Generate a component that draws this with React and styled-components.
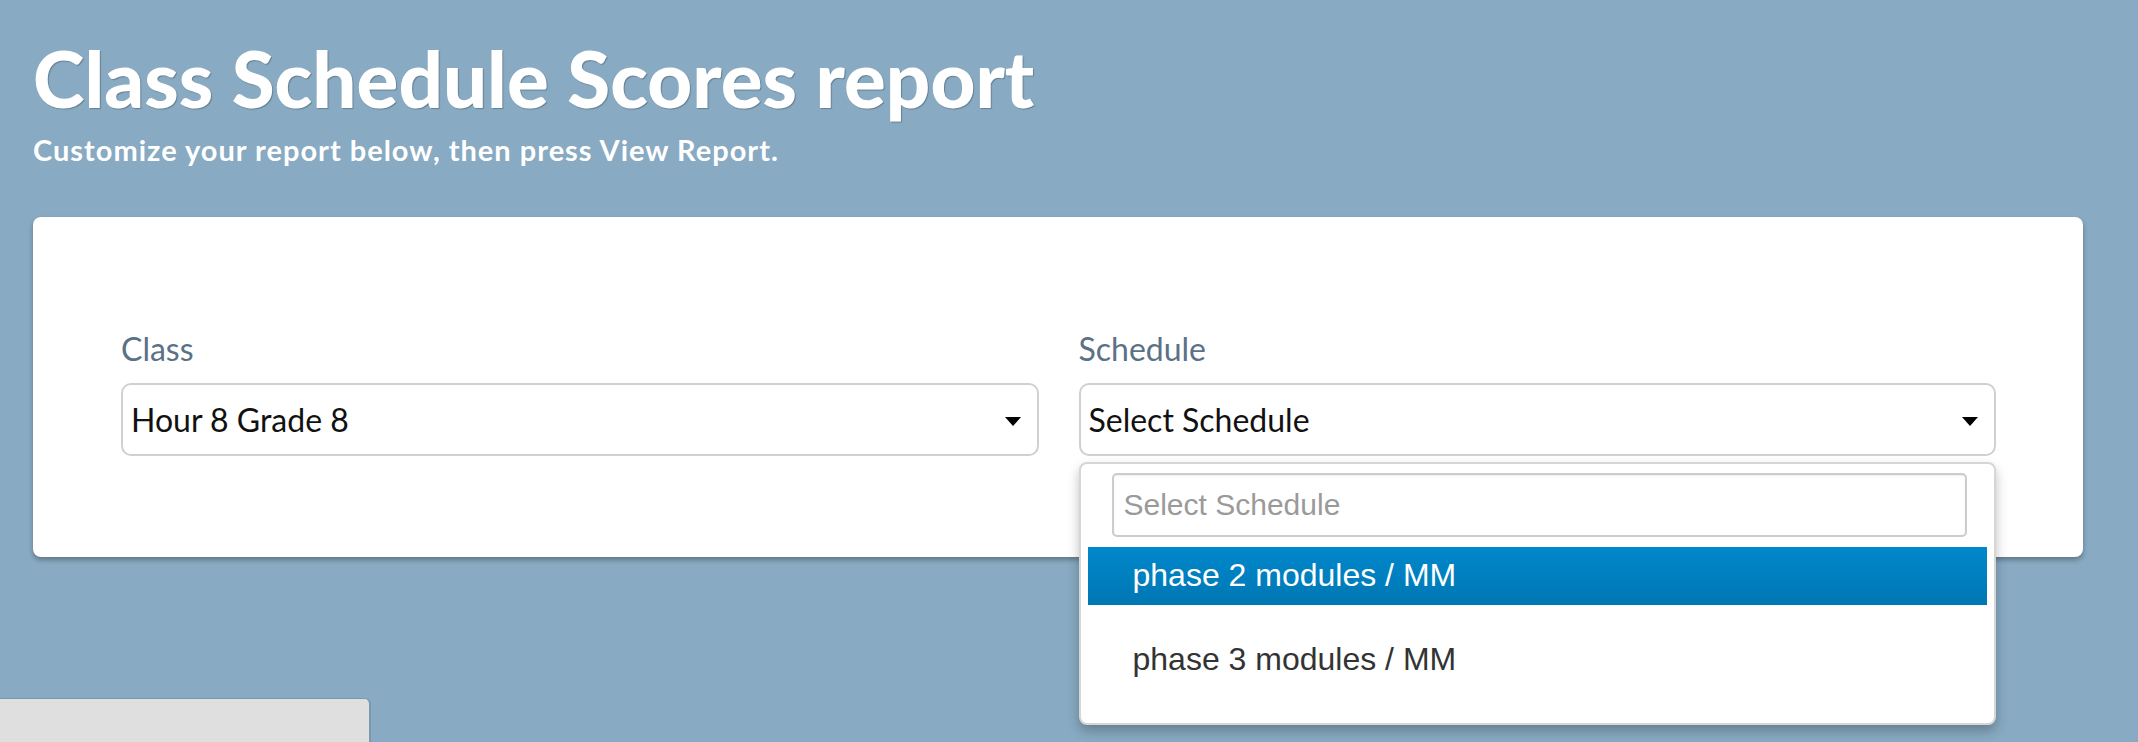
import React from 'react';
import styled, { createGlobalStyle } from 'styled-components';

const GlobalStyle = createGlobalStyle`
  html, body {
    margin: 0;
    padding: 0;
    overflow: hidden;
    background-color: #88aac2;
  }
  body {
    font-family: 'Lato', 'Noto Sans', sans-serif;
  }
`;

const Page = styled.div`
  display: flex;
  flex-direction: column;
  min-height: 742px;
`;

const Header = styled.div`
  padding: 32px 33px 0 33px;
`;

const Title = styled.h1`
  margin: 0;
  font-family: 'Lato', sans-serif;
  font-weight: 900;
  font-size: 78px;
  line-height: 1.2;
  color: #ffffff;
  text-shadow: 1px 1px 1px rgba(0, 0, 0, 0.25);
`;

const Subtitle = styled.div`
  margin-top: 7px;
  font-family: 'Lato', sans-serif;
  font-weight: 700;
  font-size: 29px;
  letter-spacing: 1px;
  line-height: 1.2;
  color: #ffffff;
`;

const Card = styled.div`
  margin: 50px 55px 0 33px;
  background-color: #ffffff;
  border-radius: 8px;
  box-shadow: 0 3px 5px rgba(0, 0, 0, 0.3);
  padding: 113px 87px 101px 88px;
  display: grid;
  grid-template-columns: 1fr 1fr;
  column-gap: 40px;
`;

const Field = styled.div`
  position: relative;
  display: flex;
  flex-direction: column;
`;

const Label = styled.label`
  font-family: 'Lato', sans-serif;
  font-size: 32px;
  line-height: 1.2;
  color: #5b7186;
  margin-bottom: 14px;
`;

const SelectBox = styled.div`
  height: 73px;
  box-sizing: border-box;
  border: 2px solid #d0d0d0;
  border-radius: 10px;
  display: flex;
  align-items: center;
  justify-content: space-between;
  padding: 0 16px 0 8px;
  font-family: 'Lato', sans-serif;
  font-size: 32px;
  color: #111111;
`;

const Caret = styled.span`
  width: 0;
  height: 0;
  border-left: 8px solid transparent;
  border-right: 8px solid transparent;
  border-top: 9px solid #000000;
  margin-top: 4px;
`;

const Dropdown = styled.div`
  position: absolute;
  top: calc(100% + 6px);
  left: 0;
  right: 0;
  box-sizing: border-box;
  background-color: #ffffff;
  border: 2px solid #d6d6d6;
  border-radius: 8px;
  box-shadow: 0 6px 12px rgba(0, 0, 0, 0.25);
  padding: 9px 7px 34px 7px;
  z-index: 5;
`;

const Search = styled.div`
  margin: 0 20px 10px 24px;
  height: 64px;
  box-sizing: border-box;
  border: 2px solid #cccccc;
  border-radius: 5px;
  box-shadow: inset 0 1px 2px rgba(0, 0, 0, 0.08);
  display: flex;
  align-items: center;
  padding-left: 10px;
  font-family: 'Liberation Sans', Arial, sans-serif;
  font-size: 30px;
  color: #9a9a9a;
`;

const Option = styled.div`
  height: 58px;
  display: flex;
  align-items: center;
  padding-left: 45px;
  margin-top: ${(props) => (props.$gap ? '26px' : '0')};
  font-family: 'Liberation Sans', Arial, sans-serif;
  font-size: 32px;
  color: ${(props) => (props.$active ? '#ffffff' : '#333333')};
  background: ${(props) =>
    props.$active ? 'linear-gradient(to bottom, #0088cc, #0077b3)' : 'transparent'};
`;

const BottomTab = styled.div`
  margin-top: auto;
  width: 371px;
  height: 44px;
  box-sizing: border-box;
  background-color: #dfdfdf;
  border-top: 1px solid #7b98ac;
  border-right: 2px solid #7b98ac;
  border-top-right-radius: 6px;
`;

const App = () => {
  return (
    <>
      <GlobalStyle />
      <Page>
        <Header>
          <Title>Class Schedule Scores report</Title>
          <Subtitle>Customize your report below, then press View Report.</Subtitle>
        </Header>
        <Card>
          <Field>
            <Label>Class</Label>
            <SelectBox>
              <span>Hour 8 Grade 8</span>
              <Caret />
            </SelectBox>
          </Field>
          <Field>
            <Label>Schedule</Label>
            <SelectBox>
              <span>Select Schedule</span>
              <Caret />
            </SelectBox>
            <Dropdown>
              <Search>Select Schedule</Search>
              <Option $active>phase 2 modules / MM</Option>
              <Option $gap>phase 3 modules / MM</Option>
            </Dropdown>
          </Field>
        </Card>
        <BottomTab />
      </Page>
    </>
  );
};

export default App;
